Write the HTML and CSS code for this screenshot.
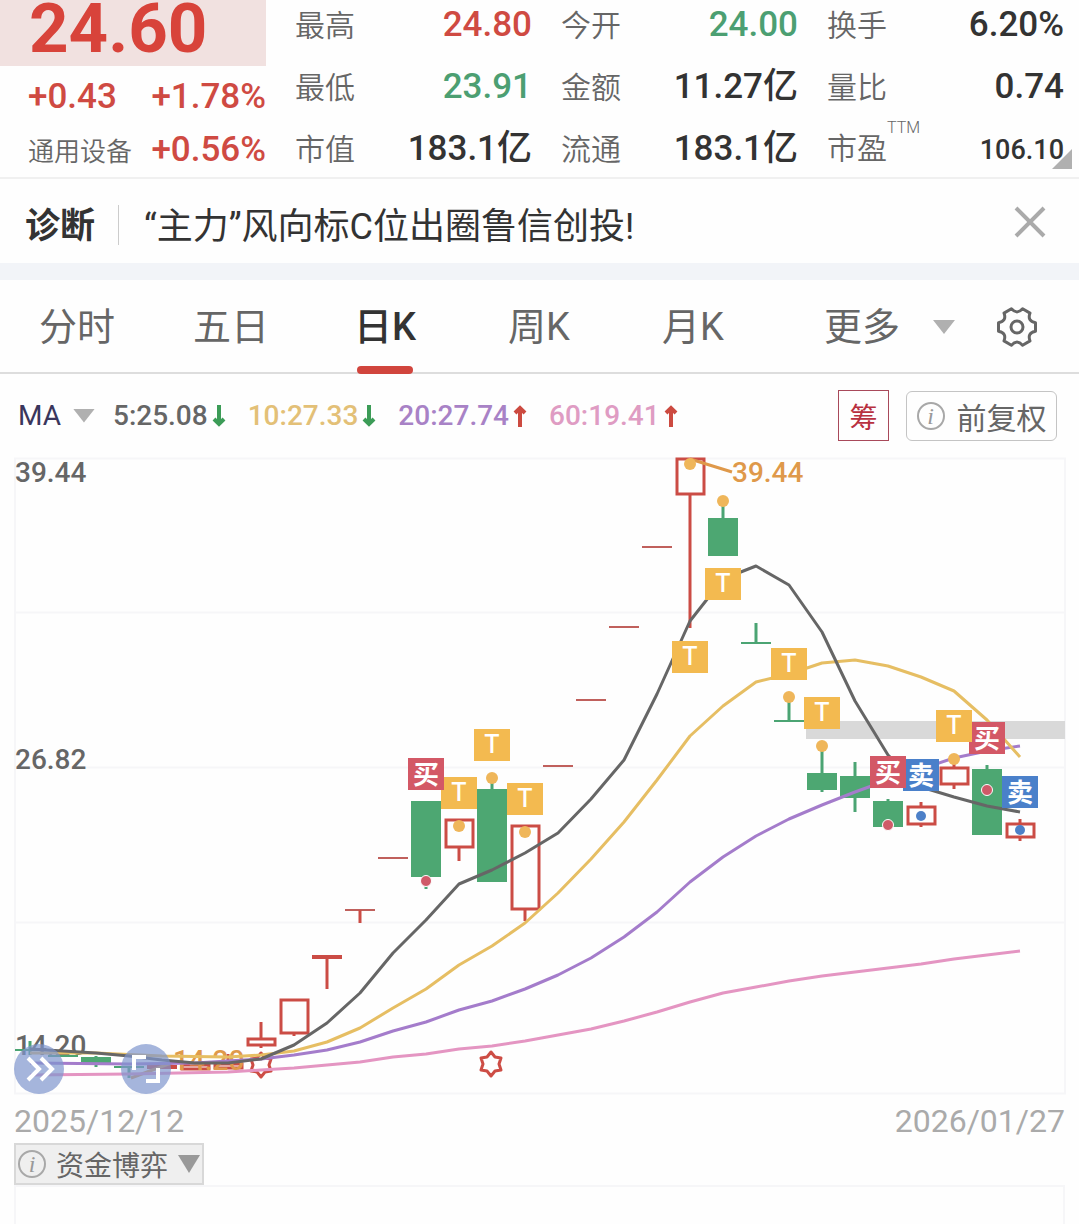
FILE: index.html
```html
<!DOCTYPE html>
<html lang="zh-CN">
<head>
    <meta charset="UTF-8">
    <meta name="viewport" content="width=device-width, initial-scale=1.0">
    <title>日K</title>
    <link rel="stylesheet" href="styles.css">
</head>
<body>

<header class="quote">
    <div class="price-col">
        <div class="price">24.60</div>
        <div class="change up"><span>+0.43</span><span>+1.78%</span></div>
        <div class="change up"><a class="sector" href="#">通用设备</a><span>+0.56%</span></div>
    </div>
    <dl class="stats">
        <div><dt>最高</dt><dd class="up">24.80</dd></div>
        <div><dt>今开</dt><dd class="down">24.00</dd></div>
        <div><dt>换手</dt><dd>6.20%</dd></div>
        <div><dt>最低</dt><dd class="down">23.91</dd></div>
        <div><dt>金额</dt><dd>11.27亿</dd></div>
        <div><dt>量比</dt><dd>0.74</dd></div>
        <div><dt>市值</dt><dd>183.1亿</dd></div>
        <div><dt>流通</dt><dd>183.1亿</dd></div>
        <div><dt>市盈<sup>TTM</sup></dt><dd class="small">106.10</dd></div>
    </dl>
    <span class="corner"></span>
</header>

<section class="notice">
    <strong>诊断</strong>
    <a href="#">“主力”风向标C位出圈鲁信创投!</a>
    <button type="button" class="close" aria-label="关闭">
        <svg viewBox="0 0 32 32" width="32" height="32"><path d="M2 2L30 30M30 2L2 30"/></svg>
    </button>
</section>

<nav class="tabs">
    <button type="button">分时</button>
    <button type="button">五日</button>
    <button type="button" class="active">日K</button>
    <button type="button">周K</button>
    <button type="button">月K</button>
    <button type="button" class="more">更多<i class="caret"></i></button>
    <button type="button" class="gear" aria-label="设置">
        <svg viewBox="0 0 40 40" width="40" height="40">
            <path d="M38.500 24.300Q30 25.800 33 33.900L25.600 38.200Q20 32 14.400 38.200L7 33.900Q10 25.800 1.500 24.300V15.700Q10 14.200 7 6.100L14.400 1.800Q20 8 25.600 1.800L33 6.100Q30 14.200 38.500 15.700Z"/>
            <circle cx="20" cy="20" r="6"/>
        </svg>
    </button>
</nav>

<section class="ma-bar">
    <button type="button" class="ma-select">MA<i class="caret"></i></button>
    <span class="ma val5">5:25.08<svg class="arrow fall" viewBox="0 0 14 24" width="14" height="24"><path d="M7 1V20M2 15L7 20L12 15"/></svg></span>
    <span class="ma val10">10:27.33<svg class="arrow fall" viewBox="0 0 14 24" width="14" height="24"><path d="M7 1V20M2 15L7 20L12 15"/></svg></span>
    <span class="ma val20">20:27.74<svg class="arrow rise" viewBox="0 0 14 24" width="14" height="24"><path d="M7 23V4M2 9L7 4L12 9"/></svg></span>
    <span class="ma val60">60:19.41<svg class="arrow rise" viewBox="0 0 14 24" width="14" height="24"><path d="M7 23V4M2 9L7 4L12 9"/></svg></span>
    <button type="button" class="chip">筹</button>
    <button type="button" class="adjust"><i class="info">i</i>前复权</button>
</section>

<section class="chart">
    <svg class="kline" viewBox="0 457 1079 640" role="img" aria-label="日K线图">
        <defs>
            <path id="star" d="M0-12L4-7L10-6L8 0L10 6L4 7L0 12L-4 7L-10 6L-8 0L-10-6L-4-7Z"/>
        </defs>

        <!-- grid -->
        <path class="grid" d="M15 458.500H1065V1093.500H15ZM15 612.500H1065M15 767.500H1065M15 922.500H1065"/>
        <rect class="gap" x="806" y="721" width="259" height="18"/>

        <text class="axis" x="15" y="482">39.44</text>
        <text class="axis" x="15" y="769">26.82</text>
        <text class="axis" x="15" y="1055">14.20</text>

        <!-- stars -->
        <use class="star" href="#star" x="261" y="1065"/>
        <use class="star" href="#star" x="491" y="1064"/>

        <!-- one-price days -->
        <path class="flat" d="M345 910H375M378 858H408M543 766H573M576 700H606M609 627H639M642 547H672"/>
        <path class="flat-down" d="M15 1050H45M48 1056H78M114 1067H144M741 643H771M774 721H804"/>

        <!-- falling candles -->
        <path class="wick-down" d="M30 1041V1055M96 1056V1067M129 1066V1078M426 877V889M492 778V790M723 501V518M756 623V643M789 697V721M822 746V792M855 762V812M888 799V802M987 765V770"/>
        <g class="body-down">
            <rect x="81" y="1057" width="30" height="8"/>
            <rect x="411" y="801" width="30" height="76"/>
            <rect x="477" y="789" width="30" height="93"/>
            <rect x="708" y="518" width="30" height="38"/>
            <rect x="807" y="773" width="30" height="17"/>
            <rect x="840" y="776" width="30" height="22"/>
            <rect x="873" y="801" width="30" height="26"/>
            <rect x="972" y="769" width="30" height="66"/>
        </g>

        <!-- rising candles -->
        <path class="wick-up" d="M228 1054V1064M261 1022V1038M261 1046V1048M294 1034V1036M327 958V989M360 910V923M459 848V861M525 910V921M690 494V628M921 802V806M921 824V827M954 762V767M954 785V789M1020 819V823M1020 838V841"/>
        <path class="bar-up" d="M147 1067H177M312 957H342"/>
        <g class="body-up">
            <rect x="182" y="1065" width="27" height="4"/>
            <rect x="215" y="1064" width="27" height="4"/>
            <rect x="248" y="1039" width="27" height="6"/>
            <rect x="281" y="1000" width="27" height="33"/>
            <rect x="446" y="820" width="27" height="27"/>
            <rect x="512" y="826" width="27" height="83"/>
            <rect x="677" y="459" width="27" height="35"/>
            <rect x="908" y="807" width="27" height="17"/>
            <rect x="941" y="768" width="27" height="16"/>
            <rect x="1007" y="824" width="27" height="13"/>
        </g>

        <!-- low / high marks -->
        <path class="leader" d="M131 1078L174 1062M690 459L732 472"/>
        <text class="mark" x="173" y="1070">14.20</text>
        <text class="mark" x="732" y="482">39.44</text>

        <!-- moving averages -->
        <polyline class="line ma60" points="30,1075 129,1074 228,1072 261,1070 294,1068 327,1065 360,1062 393,1057 426,1054 459,1049 492,1046 525,1041 558,1035 591,1029 624,1021 657,1012 690,1002 723,993 756,987 789,981 822,976 855,972 888,968 921,964 954,959 987,955 1020,951"/>
        <polyline class="line ma20" points="30,1063 129,1064 195,1063 261,1059 294,1055 327,1050 360,1042 393,1031 426,1022 459,1010 492,1001 525,989 558,975 591,958 624,937 657,912 690,882 723,857 756,836 789,819 822,805 855,792 888,780 921,769 954,758 987,751 1020,746"/>
        <polyline class="line ma10" points="30,1053 96,1053 162,1056 228,1057 261,1055 294,1051 327,1042 360,1028 393,1008 426,989 459,965 492,946 525,923 558,893 591,859 624,822 657,780 690,736 723,706 756,682 789,674 822,663 855,660 888,666 921,677 954,691 987,720 1020,757"/>
        <polyline class="line ma5" points="30,1049 63,1051 96,1053 129,1056 162,1060 195,1063 228,1063 261,1059 294,1045 327,1023 360,993 393,953 426,920 459,884 492,870 525,853 558,833 591,799 624,760 657,694 690,621 723,579 756,566 789,585 822,632 855,701 888,755 921,787 954,797 987,806 1020,812"/>

        <!-- trade dots -->
        <g class="dot-t">
            <circle cx="459" cy="826" r="6"/>
            <circle cx="492" cy="778" r="6"/>
            <circle cx="525" cy="832" r="6"/>
            <circle cx="690" cy="464" r="6"/>
            <circle cx="723" cy="501" r="6"/>
            <circle cx="789" cy="697" r="6"/>
            <circle cx="822" cy="746" r="6"/>
            <circle cx="954" cy="759" r="6"/>
        </g>
        <g class="dot-buy">
            <circle cx="426" cy="881" r="5.500"/>
            <circle cx="888" cy="825" r="5.500"/>
            <circle cx="987" cy="790" r="5.500"/>
        </g>
        <g class="dot-sell">
            <circle cx="921" cy="816" r="5"/>
            <circle cx="1020" cy="830" r="5"/>
        </g>

        <!-- trade flags -->
        <g class="flag-sell">
            <rect x="903" y="759" width="36" height="32"/><text x="921" y="785">卖</text>
            <rect x="1002" y="776" width="36" height="32"/><text x="1020" y="802">卖</text>
        </g>
        <g class="flag-buy">
            <rect x="870" y="756" width="36" height="32"/><text x="888" y="782">买</text>
            <rect x="969" y="722" width="36" height="32"/><text x="987" y="748">买</text>
        </g>
        <g class="flag-t">
            <rect x="441" y="777" width="36" height="32"/><text x="459" y="801">T</text>
            <rect x="474" y="729" width="36" height="32"/><text x="492" y="753">T</text>
            <rect x="507" y="783" width="36" height="32"/><text x="525" y="807">T</text>
            <rect x="672" y="641" width="36" height="32"/><text x="690" y="665">T</text>
            <rect x="705" y="568" width="36" height="32"/><text x="723" y="592">T</text>
            <rect x="771" y="648" width="36" height="32"/><text x="789" y="672">T</text>
            <rect x="804" y="697" width="36" height="32"/><text x="822" y="721">T</text>
            <rect x="936" y="710" width="36" height="32"/><text x="954" y="734">T</text>
        </g>
        <g class="flag-buy">
            <rect x="408" y="758" width="36" height="32"/><text x="426" y="784">买</text>
        </g>
    </svg>
    <div class="float-btns">
        <button type="button" aria-label="展开">
            <svg viewBox="0 0 50 50" width="50" height="50"><path d="M14 14L25 25L14 36M27 14L38 25L27 36"/></svg>
        </button>
        <button type="button" aria-label="全屏">
            <svg viewBox="0 0 50 50" width="50" height="50"><path d="M13 26V13H25M25 37H37V24"/></svg>
        </button>
    </div>
</section>

<div class="dates"><span>2025/12/12</span><span>2026/01/27</span></div>

<section class="sub">
    <button type="button" class="sub-select"><i class="info">i</i>资金博弈<i class="caret"></i></button>
    <div class="sub-chart"></div>
</section>

</body>
</html>
```

FILE: styles.css
```css
* {
    box-sizing: border-box;
}

body {
    margin: 0;
    min-height: 100vh;
    display: flex;
    flex-direction: column;
    background-color: #fefefe;
    color: #333333;
    font-family: Roboto, "Noto Sans CJK SC", sans-serif;
}

button {
    border: none;
    padding: 0;
    background: none;
    color: inherit;
    font: inherit;
    cursor: pointer;
}

a {
    color: inherit;
    text-decoration: none;
}

svg {
    display: block;
    fill: none;
}

.up {
    color: #cf4a42;
}

.down {
    color: #4c9f72;
}

.caret {
    width: 22px;
    height: 14px;
    background-color: #b0b0b0;
    clip-path: polygon(0 0, 100% 0, 50% 100%);
}

.info {
    width: 28px;
    height: 28px;
    border: 2px solid #a8a8a8;
    border-radius: 50%;
    color: #999999;
    font: italic 24px/24px "Liberation Serif", serif;
    text-align: center;
}

/* quote header */
.quote {
    position: relative;
    display: flex;
    height: 179px;
    border-bottom: 2px solid #f0f0f0;
}

.price-col {
    width: 266px;
    flex: none;
}

.price {
    height: 66px;
    padding-left: 29px;
    background-color: #f1e1e0;
    color: #d8433a;
    font-size: 69px;
    font-weight: 700;
    line-height: 58px;
}

.change {
    display: flex;
    justify-content: space-between;
    align-items: baseline;
    padding-left: 28px;
    font-size: 35px;
    font-weight: 500;
    line-height: 53px;
}

.change:nth-child(2) {
    padding-top: 4px;
}

.sector {
    color: #666666;
    font-size: 26px;
    font-weight: 350;
}

.stats {
    flex: 1;
    display: grid;
    grid-template-columns: repeat(3, 1fr);
    grid-auto-rows: 62px;
    column-gap: 29px;
    height: 174px;
    margin: 0;
    padding: 0 15px 0 29px;
    align-content: center;
}

.stats div {
    display: flex;
    justify-content: space-between;
    align-items: baseline;
    line-height: 62px;
}

.stats dt {
    color: #666666;
    font-size: 30px;
    font-weight: 350;
    white-space: nowrap;
}

.stats dd {
    margin: 0;
    font-size: 35px;
    font-weight: 500;
}

.stats .small {
    font-size: 27px;
}

.stats sup {
    font-size: 16px;
    line-height: 0;
    vertical-align: 26px;
}

.corner {
    position: absolute;
    right: 7px;
    bottom: 8px;
    width: 20px;
    height: 20px;
    background-color: #b0b0b0;
    clip-path: polygon(100% 0, 100% 100%, 0 100%);
}

/* notice */
.notice {
    display: flex;
    align-items: center;
    height: 101px;
    padding: 8px 33px 0 25px;
    border-bottom: 17px solid #f2f4f8;
    font-size: 36px;
}

.notice strong,
.notice a {
    padding-top: 4px;
    line-height: 36px;
}

.notice strong {
    padding-right: 23px;
    border-right: 1px solid #cccccc;
    font-size: 35px;
}

.notice a {
    padding-left: 25px;
}

.close {
    margin-left: auto;
    margin-bottom: 6px;
    stroke: #aaaaaa;
    stroke-width: 4;
}

/* tabs */
.tabs {
    display: grid;
    grid-template-columns: 154fr 154fr 154fr 154fr 154fr 185fr 124fr;
    height: 94px;
    border-bottom: 2px solid #dddddd;
    color: #666666;
    font-size: 38px;
    font-weight: 400;
    line-height: 94px;
}

.tabs .active {
    position: relative;
    color: #333333;
    font-weight: 500;
}

.tabs .active::after {
    content: "";
    position: absolute;
    left: calc(50% - 28px);
    bottom: 0;
    width: 56px;
    height: 8px;
    border-radius: 4px;
    background-color: #d1453d;
}

.tabs .more {
    display: flex;
    justify-content: flex-end;
    align-items: center;
    gap: 33px;
}

.gear {
    display: flex;
    justify-content: center;
    align-items: center;
    stroke: #666666;
    stroke-width: 3;
    stroke-linejoin: round;
}

/* moving average bar */
.ma-bar {
    display: flex;
    align-items: center;
    height: 83px;
    padding: 0 22px 0 18px;
}

.ma-select {
    display: flex;
    align-items: center;
    gap: 12px;
    margin-right: 18px;
    color: #3a365c;
    font-size: 28px;
}

.ma {
    display: flex;
    align-items: center;
    gap: 4px;
    margin-right: 22px;
    font-size: 28px;
    font-weight: 500;
}

.val5 {
    color: #666666;
}

.val10 {
    color: #e3c077;
}

.val20 {
    color: #a882c6;
}

.val60 {
    color: #df9cc3;
}

.arrow {
    stroke-width: 4;
}

.fall {
    stroke: #3c9c57;
}

.rise {
    stroke: #cc4a40;
}

.chip {
    width: 51px;
    height: 51px;
    margin-left: auto;
    border: 1px solid #a8495a;
    color: #b8303f;
    font-size: 28px;
}

.adjust {
    display: flex;
    align-items: center;
    justify-content: center;
    gap: 12px;
    width: 151px;
    height: 50px;
    margin-left: 17px;
    border: 1px solid #c4c4c4;
    border-radius: 6px;
    color: #666666;
    font-size: 30px;
}

/* chart */
.chart {
    position: relative;
}

.kline {
    width: 100%;
    height: auto;
    overflow: visible;
}

.grid {
    stroke: #f6f6f8;
    stroke-width: 2;
}

.gap {
    fill: #d9d9d9;
}

.axis,
.mark {
    fill: #666666;
    font-size: 28px;
    font-weight: 500;
}

.mark {
    fill: #df994a;
}

.leader {
    stroke: #df994a;
    stroke-width: 3;
}

.star {
    stroke: #cd4d45;
    stroke-width: 3;
    stroke-linejoin: round;
}

.flat {
    stroke: #c0605c;
    stroke-width: 2;
}

.flat-down {
    stroke: #4ba473;
    stroke-width: 2;
}

.wick-down {
    stroke: #4ba473;
    stroke-width: 3;
}

.body-down {
    fill: #4da772;
}

.wick-up,
.body-up {
    stroke: #cb4c45;
    stroke-width: 3;
}

.bar-up {
    stroke: #cb4c45;
    stroke-width: 4;
}

.line {
    stroke-width: 3;
    stroke-linejoin: round;
}

.ma5 {
    stroke: #666666;
}

.ma10 {
    stroke: #e6be63;
}

.ma20 {
    stroke: #a47ccb;
}

.ma60 {
    stroke: #e495c2;
}

.dot-t {
    fill: #efb65a;
}

.dot-buy {
    fill: #cf5a68;
    stroke: #ffffff;
}

.dot-sell {
    fill: #4c80c8;
}

.flag-t {
    fill: #f3ba50;
}

.flag-buy {
    fill: #d35866;
}

.flag-sell {
    fill: #4a80ca;
}

.flag-t text,
.flag-buy text,
.flag-sell text {
    fill: #ffffff;
    font-size: 26px;
    font-weight: 700;
    text-anchor: middle;
}

.flag-t text {
    font-family: Inter, sans-serif;
    font-size: 25px;
    font-weight: 500;
}

.float-btns {
    position: absolute;
    left: 14px;
    bottom: 3px;
    display: flex;
    gap: 57px;
}

.float-btns button {
    border-radius: 50%;
    background-color: rgba(127, 149, 205, 0.7);
    stroke: #ffffff;
    stroke-width: 4;
}

.dates {
    display: flex;
    justify-content: space-between;
    align-items: center;
    height: 46px;
    padding: 2px 14px 0;
    color: #aaaaaa;
    font-size: 32px;
}

/* sub chart */
.sub {
    flex: 1;
    display: flex;
    flex-direction: column;
    align-items: flex-start;
    padding: 0 14px;
}

.sub-select {
    display: flex;
    align-items: center;
    height: 42px;
    padding: 0 2px;
    border: 2px solid #d8d8d8;
    background-color: #efefef;
    color: #666666;
    font-size: 28px;
}

.sub-select .info {
    margin-right: 10px;
}

.sub-select .caret {
    height: 18px;
    margin-left: 10px;
    background-color: #999999;
}

.sub-chart {
    flex: 1;
    width: 100%;
    border: 2px solid #f6f6f8;
    border-bottom: none;
}
```
